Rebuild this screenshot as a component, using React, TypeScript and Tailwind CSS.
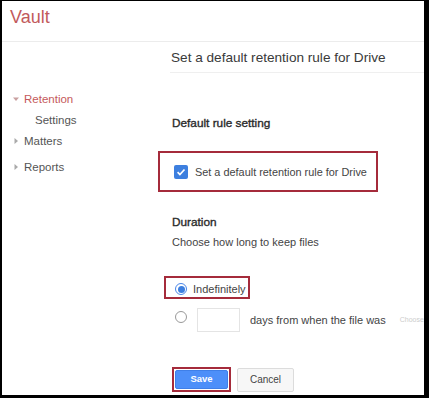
const navItems = [
  { label: 'Matters', top: 'mt-[5px]' },
  { label: 'Reports', top: 'mt-[10px]' },
];

function Caret({ open, color }: { open?: boolean; color: string }) {
  return (
    <svg width="6" height="6" viewBox="0 0 6 6" className="shrink-0">
      {open ? <path d="M0 1.5h6L3 5z" fill={color} /> : <path d="M1.5 0v6L5 3z" fill={color} />}
    </svg>
  );
}

function App() {
  return (
    <div className="w-[429px] h-[398px] bg-white border-black border-l-2 border-t border-r-[5px] border-b-[3px] overflow-hidden font-['Liberation_Sans',Arial,sans-serif] text-[#444]">
      <div className="h-[41px] border-b border-[#ececec] pl-[8px] pt-[5px]">
        <span className="text-[18px] leading-[22px] text-[#c25a5c]">Vault</span>
      </div>

      <div className="flex">
        <div className="w-[156px] shrink-0 text-[11.5px] leading-[16px] text-[#555]">
          <div className="mt-[49px] flex items-center gap-[5px] pl-[11px] text-[#c5595b]">
            <Caret open color="#c9a0a0" />
            Retention
          </div>
          <div className="mt-[5px] pl-[33px]">Settings</div>
          {navItems.map((item) => (
            <div key={item.label} className={`${item.top} flex items-center gap-[5px] pl-[11px]`}>
              <Caret color="#aaa" />
              {item.label}
            </div>
          ))}
        </div>

        <div className="flex-1 min-w-0">
          <div className="ml-[12px] h-[31px] border-b border-[#efefef] pl-[1px] pt-[8px] text-[13.6px] leading-[16px] text-[#3a3a3a] whitespace-nowrap">
            Set a default retention rule for Drive
          </div>

          <div className="mt-[42px] pl-[14px] text-[11.8px] leading-[16px] text-[#2a2a2a] [-webkit-text-stroke:0.35px_#2a2a2a]">
            Default rule setting
          </div>

          <div className="mt-[20px] w-[220px] h-[41px] border-2 border-[#a52b3b] flex items-center pl-[14px] gap-[7px]">
            <div className="w-[14px] h-[14px] rounded-[2px] bg-[#3d7fdf] flex items-center justify-center">
              <svg width="10" height="10" viewBox="0 0 10 10">
                <path d="M1.6 5.2l2.3 2.3 4.6-5" stroke="white" strokeWidth="1.7" fill="none" />
              </svg>
            </div>
            <span className="text-[10.9px] leading-[14px] whitespace-nowrap">Set a default retention rule for Drive</span>
          </div>

          <div className="mt-[22px] pl-[14px] text-[11.8px] leading-[16px] text-[#2a2a2a] [-webkit-text-stroke:0.35px_#2a2a2a]">
            Duration
          </div>
          <div className="mt-[4px] pl-[14px] text-[11px] leading-[16px] whitespace-nowrap">
            Choose how long to keep files
          </div>

          <div className="mt-[26px] ml-[6px] w-[86px] h-[23px] border-2 border-[#a52b3b] flex items-center pl-[9px] pt-[3px] gap-[6px]">
            <div className="w-[12px] h-[12px] rounded-full border border-[#4a86e8] flex items-center justify-center">
              <div className="w-[7px] h-[7px] rounded-full bg-[#3d7fdf]" />
            </div>
            <span className="text-[11px] leading-[14px]">Indefinitely</span>
          </div>

          <div className="mt-[9px] flex items-center h-[24px] pl-[17px] whitespace-nowrap">
            <div className="w-[12px] h-[12px] rounded-full border border-[#999] mt-[-6px]" />
            <div className="ml-[10px] w-[43px] h-[24px] border border-[#e4e4e4]" />
            <span className="ml-[10px] text-[11px] leading-[14px]">days from when the file was</span>
            <span className="ml-[14px] text-[7px] text-[#ccc]">Choose</span>
          </div>

          <div className="mt-[35px] ml-[14px] flex items-center gap-[6px]">
            <div className="w-[59px] h-[25px] border-2 border-[#a52b3b] p-[1px]">
              <div className="h-full rounded-[2px] bg-[#4d8ff9] border border-[#3f7fe8] flex items-center justify-center text-[9.5px] font-bold text-white">
                Save
              </div>
            </div>
            <div className="w-[57px] h-[24px] rounded-[2px] border border-[#dcdcdc] bg-[#f7f7f7] flex items-center justify-center text-[10px] text-[#444]">
              Cancel
            </div>
          </div>
        </div>
      </div>
    </div>
  );
}

export default App;
